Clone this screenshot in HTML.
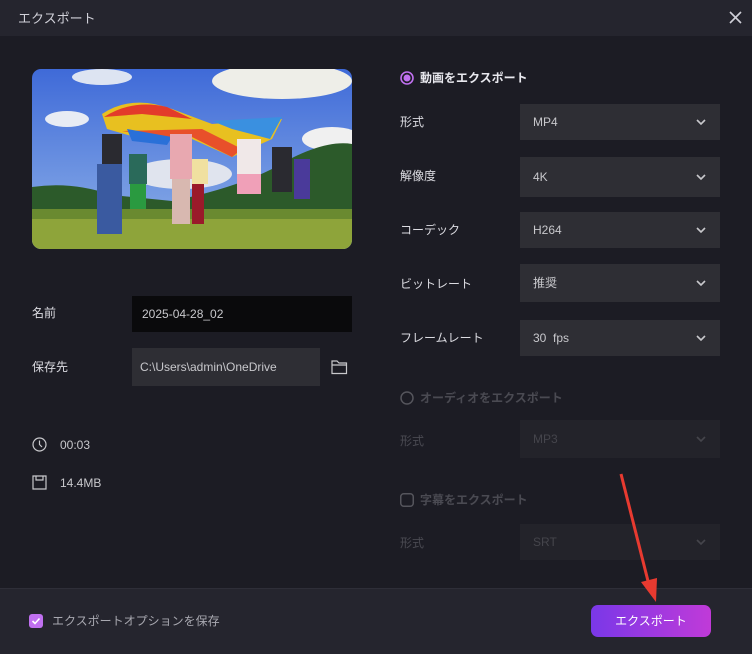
<!DOCTYPE html>
<html><head><meta charset="utf-8"><style>
*{margin:0;padding:0;box-sizing:border-box}
body{width:752px;height:654px;background:#1c1c24;font-family:"Liberation Sans","Noto Sans CJK JP",sans-serif;color:#d8d8de;position:relative;overflow:hidden;font-size:12px}
.hdr{position:absolute;left:0;top:0;width:752px;height:36px;background:#25252e}
.hdr .t{position:absolute;left:18px;top:11px;font-size:13px;color:#d0d0d8;line-height:16px}
.ftr{position:absolute;left:0;top:588px;width:752px;height:66px;background:#25252e;border-top:1px solid #2e2e38}
.abs{position:absolute}
.lbl{position:absolute;font-size:12px;color:#dcdce2;line-height:14px}
.sel{position:absolute;left:520px;width:200px;height:36px;background:#2e2e34;color:#c8c8cc;font-size:12px;padding:11px 0 0 13px;line-height:14px}
.sel svg{position:absolute;right:14px;top:15px}
.dis{background:#23232a;color:#45454c}
</style></head><body>
<div class="hdr"><div class="t">エクスポート</div>
<svg class="abs" style="left:729px;top:11px" width="13" height="13"><path d="M1 1L12 12M12 1L1 12" stroke="#d0d0d8" stroke-width="1.6"/></svg></div>

<svg class="abs" style="left:32px;top:69px" width="320" height="180" viewBox="0 0 320 180">
<defs><clipPath id="c"><rect width="320" height="180" rx="9"/></clipPath>
<linearGradient id="sky" x1="0" y1="0" x2="0" y2="1"><stop offset="0" stop-color="#3f6ad8"/><stop offset="1" stop-color="#8fb2e8"/></linearGradient></defs>
<g clip-path="url(#c)">
<rect width="320" height="180" fill="url(#sky)"/>
<ellipse cx="250" cy="12" rx="70" ry="18" fill="#eeeee8"/>
<ellipse cx="70" cy="8" rx="30" ry="8" fill="#dde4f2"/>
<ellipse cx="35" cy="50" rx="22" ry="8" fill="#e8ecf4"/>
<ellipse cx="300" cy="70" rx="30" ry="12" fill="#f0f0f0"/>
<ellipse cx="150" cy="105" rx="50" ry="15" fill="#e0e4ee"/>
<path d="M0 118Q40 112 80 126L140 132Q200 120 240 100Q290 70 320 75V160H0Z" fill="#2c5a2a"/>
<rect y="145" width="320" height="35" fill="#8ea43a"/>
<rect y="140" width="320" height="10" fill="#6a8a30"/>
<path d="M70 45Q100 25 140 40L180 55L250 50L240 70L200 88L160 70L110 70L75 60Z" fill="#e8c020"/>
<path d="M72 48Q100 30 135 38L160 50L110 45Z" fill="#e33b2a"/>
<path d="M90 62L140 70L160 68L200 88L210 80L170 60Z" fill="#e8502a"/>
<path d="M95 60L140 68L135 76L100 72Z" fill="#2a70d8"/>
<path d="M180 52L250 48L238 70L200 60Z" fill="#3a90e0"/>
<g fill="#2a2a30"><rect x="70" y="65" width="20" height="35"/><rect x="240" y="78" width="20" height="45"/></g>
<rect x="65" y="95" width="25" height="70" fill="#3a5aa0"/>
<rect x="97" y="85" width="18" height="30" fill="#2a6a5a"/><rect x="98" y="115" width="16" height="25" fill="#2a9a40"/>
<rect x="138" y="65" width="22" height="45" fill="#e8a8b0"/><rect x="140" y="110" width="18" height="45" fill="#d8b8b0"/>
<rect x="160" y="90" width="16" height="25" fill="#f0e0a0"/><rect x="160" y="115" width="12" height="40" fill="#9a1a2a"/>
<rect x="205" y="70" width="24" height="35" fill="#f0e8e8"/><rect x="205" y="105" width="24" height="20" fill="#f0a0b8"/>
<rect x="262" y="90" width="16" height="40" fill="#4a3a9a"/>
</g></svg>

<div class="lbl" style="left:32px;top:306px">名前</div>
<div class="abs" style="left:132px;top:296px;width:220px;height:36px;background:#0a0a0c;color:#c8c8cc;padding:11px 0 0 10px;font-size:12px;line-height:14px">2025-04-28_02</div>
<div class="lbl" style="left:32px;top:360px">保存先</div>
<div class="abs" style="left:132px;top:348px;width:188px;height:38px;background:#2e2e34;color:#c8c8cc;padding:12px 0 0 8px;font-size:12px;line-height:14px">C:\Users\admin\OneDrive</div>
<svg class="abs" style="left:331px;top:359px" width="17" height="16"><path d="M1 2H6L8 4H15.5V14.5H1Z M1 6H15.5" fill="none" stroke="#c8c8cc" stroke-width="1.2"/></svg>
<svg class="abs" style="left:32px;top:437px" width="15" height="15"><circle cx="7.5" cy="7.5" r="6.5" fill="none" stroke="#c8c8cc" stroke-width="1.2"/><path d="M7.5 3.5V7.5L10 10" fill="none" stroke="#c8c8cc" stroke-width="1.2"/></svg>
<div class="lbl" style="left:60px;top:438px;color:#c8c8cc">00:03</div>
<svg class="abs" style="left:32px;top:475px" width="15" height="15"><path d="M1 1H14V14H1Z M4 1V5H11V1" fill="none" stroke="#c8c8cc" stroke-width="1.2"/></svg>
<div class="lbl" style="left:60px;top:476px;color:#c8c8cc">14.4MB</div>

<svg class="abs" style="left:400px;top:71px" width="14" height="14"><circle cx="7" cy="7" r="6" fill="none" stroke="#c070f0" stroke-width="1.6"/><circle cx="7" cy="7" r="3.5" fill="#c070f0"/></svg>
<div class="lbl" style="left:420px;top:71px;font-weight:bold;color:#e8e8ee">動画をエクスポート</div>

<div class="lbl" style="left:400px;top:115px">形式</div>
<div class="sel" style="top:104px">MP4<svg width="10" height="7"><path d="M1 1L5 5L9 1" fill="none" stroke="#c8c8cc" stroke-width="1.6"/></svg></div>
<div class="lbl" style="left:400px;top:169px">解像度</div>
<div class="sel" style="top:157px;height:40px;padding-top:13px">4K<svg width="10" height="7" style="top:17px"><path d="M1 1L5 5L9 1" fill="none" stroke="#c8c8cc" stroke-width="1.6"/></svg></div>
<div class="lbl" style="left:400px;top:223px">コーデック</div>
<div class="sel" style="top:212px">H264<svg width="10" height="7"><path d="M1 1L5 5L9 1" fill="none" stroke="#c8c8cc" stroke-width="1.6"/></svg></div>
<div class="lbl" style="left:400px;top:277px">ビットレート</div>
<div class="sel" style="top:264px;height:38px;padding-top:12px">推奨<svg width="10" height="7" style="top:16px"><path d="M1 1L5 5L9 1" fill="none" stroke="#c8c8cc" stroke-width="1.6"/></svg></div>
<div class="lbl" style="left:400px;top:331px">フレームレート</div>
<div class="sel" style="top:320px">30&nbsp;&nbsp;fps<svg width="10" height="7"><path d="M1 1L5 5L9 1" fill="none" stroke="#c8c8cc" stroke-width="1.6"/></svg></div>

<svg class="abs" style="left:400px;top:391px" width="14" height="14"><circle cx="7" cy="7" r="6" fill="none" stroke="#55555c" stroke-width="1.5"/></svg>
<div class="lbl" style="left:420px;top:391px;font-weight:bold;color:#4a4a52">オーディオをエクスポート</div>
<div class="lbl" style="left:400px;top:434px;color:#4a4a52">形式</div>
<div class="sel dis" style="top:420px;height:38px;padding-top:12px">MP3<svg width="10" height="7" style="top:16px"><path d="M1 1L5 5L9 1" fill="none" stroke="#45454c" stroke-width="1.6"/></svg></div>

<svg class="abs" style="left:400px;top:493px" width="14" height="14"><rect x="0.75" y="0.75" width="12.5" height="12.5" rx="3" fill="none" stroke="#55555c" stroke-width="1.5"/></svg>
<div class="lbl" style="left:420px;top:493px;font-weight:bold;color:#4a4a52">字幕をエクスポート</div>
<div class="lbl" style="left:400px;top:536px;color:#4a4a52">形式</div>
<div class="sel dis" style="top:524px">SRT<svg width="10" height="7"><path d="M1 1L5 5L9 1" fill="none" stroke="#45454c" stroke-width="1.6"/></svg></div>

<div class="ftr"></div>
<svg class="abs" style="left:29px;top:614px" width="14" height="14"><rect width="14" height="14" rx="3" fill="#c070f0"/><path d="M3.5 7L6 9.5L10.5 4.5" fill="none" stroke="#fff" stroke-width="1.6"/></svg>
<div class="lbl" style="left:52px;top:614px;color:#a8a8b0">エクスポートオプションを保存</div>
<div class="abs" style="left:591px;top:605px;width:120px;height:32px;border-radius:7px;background:linear-gradient(90deg,#7a38e8,#c03ad8);color:#fff;text-align:center;line-height:32px;font-size:12px">エクスポート</div>

<svg class="abs" style="left:0;top:0" width="752" height="654"><path d="M621 474L649 585" stroke="#e83a30" stroke-width="3"/><path d="M641 582L656 602L657 578Z" fill="#e83a30"/></svg>
</body></html>
